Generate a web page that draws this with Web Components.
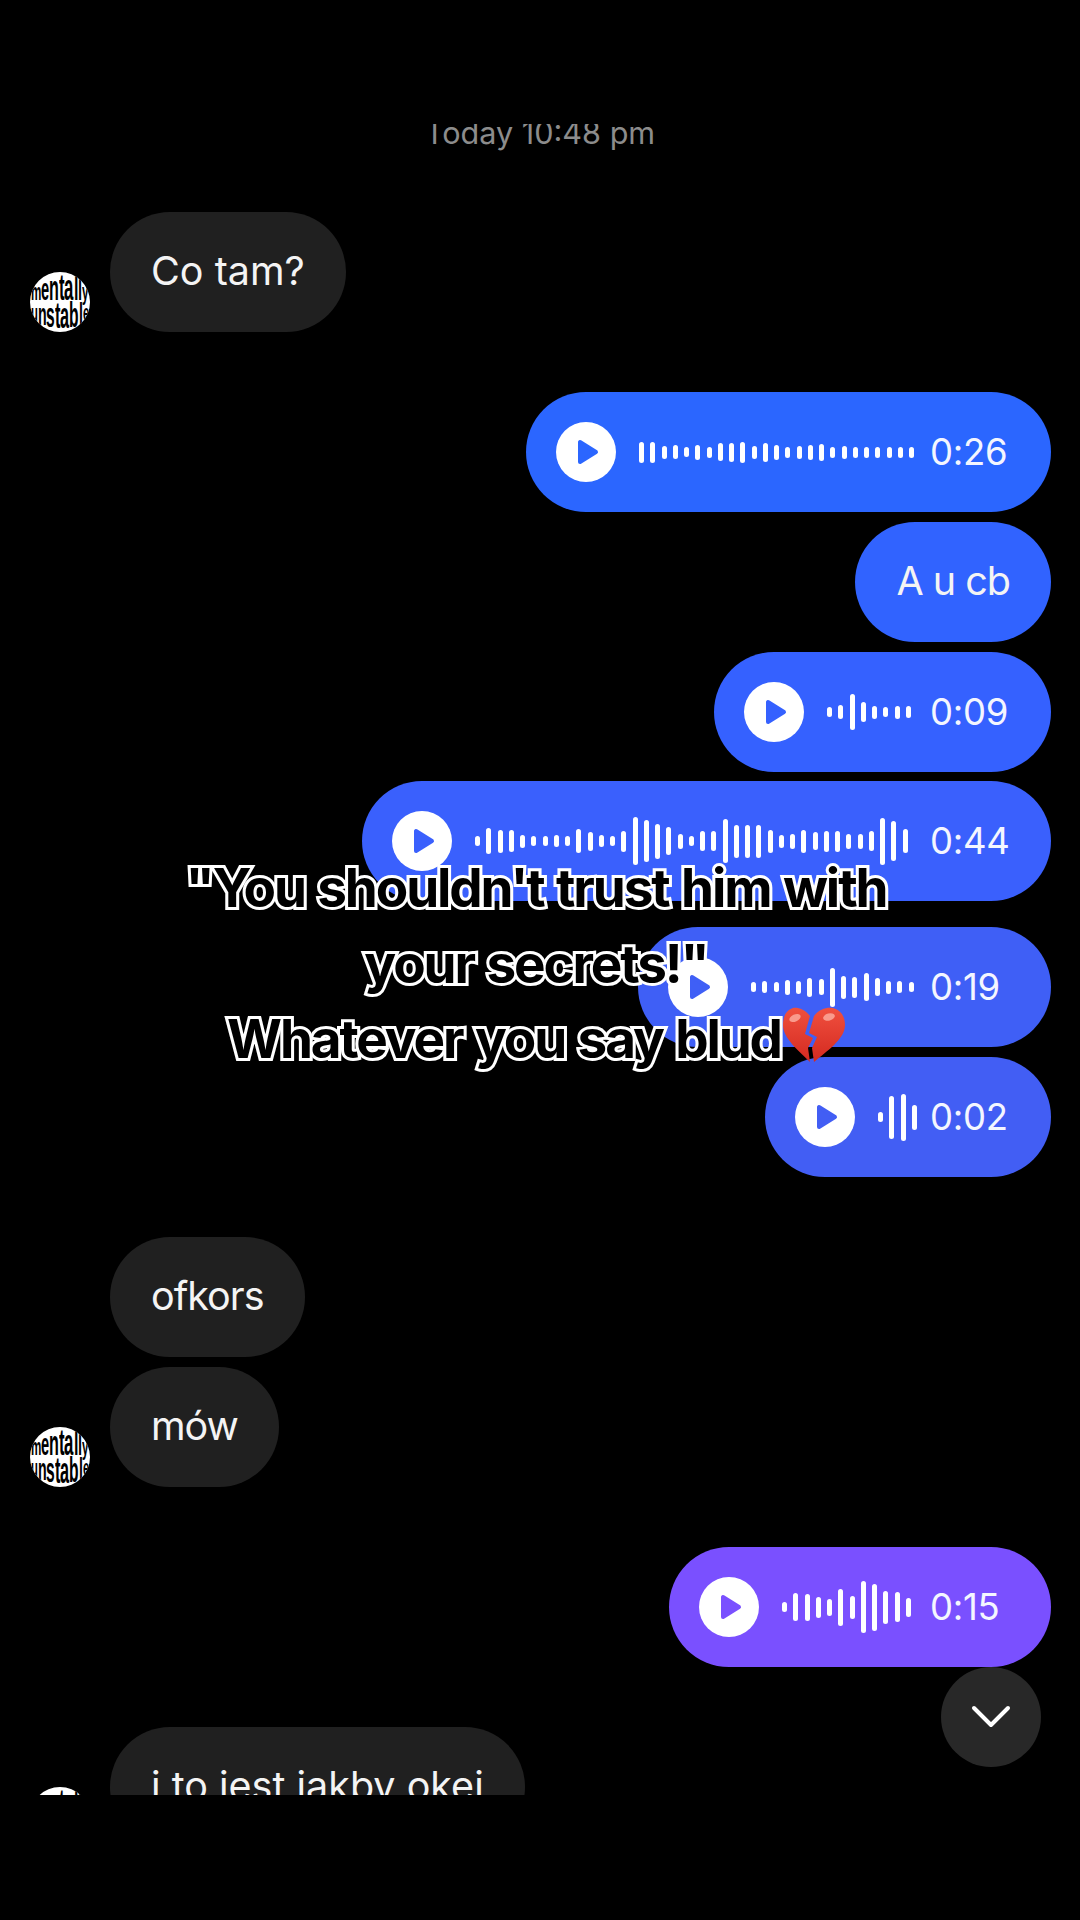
<!DOCTYPE html>
<html>
<head>
<meta charset="utf-8">
<title>Chat</title>
<style>
    html,body{margin:0;background:#000;}
    body{position:relative;width:1080px;height:1920px;overflow:hidden;font-family:Inter,Roboto,sans-serif;}
    .group{margin-top:50px;}
    .nudge{margin-top:-1px;}
    .split{margin-top:16px;}
</style>
</head>
<body>
<chat-screen>
    <chat-stamp>Today 10:48 pm</chat-stamp>

    <chat-row avatar><text-bubble>Co tam?</text-bubble></chat-row>

    <chat-row class="group"><voice-bubble width="525" time="0:26" color="#2b66ff" bars="21,21,13,14,10,15,11,18,19,21,13,19,15,11,13,15,17,11,13,11,11,11,11,11,11"></voice-bubble></chat-row>
    <chat-row><text-bubble color="#3163ff" tracking="-1">A u cb</text-bubble></chat-row>
    <chat-row><voice-bubble width="337" time="0:09" color="#3561ff" bars="10,14,36,20,13,10,13,12"></voice-bubble></chat-row>
    <chat-row class="nudge"><voice-bubble width="689" time="0:44" color="#3a60fd" bars="10,26,23,22,13,10,10,12,10,24,19,12,10,21,48,42,35,28,15,10,20,20,44,33,33,33,23,13,15,23,18,21,21,15,15,20,47,40,24"></voice-bubble></chat-row>
    <chat-row class="split"><voice-bubble width="413" time="0:19" color="#3f5ff6" bars="10,12,10,15,13,19,16,39,23,21,28,18,13,12,10"></voice-bubble></chat-row>
    <chat-row><voice-bubble width="286" time="0:02" color="#425ef4" bars="10,43,47,25"></voice-bubble></chat-row>

    <chat-row class="group" side="in"><text-bubble tracking="-1">ofkors</text-bubble></chat-row>
    <chat-row avatar><text-bubble tracking="-1">mów</text-bubble></chat-row>

    <chat-row class="group"><voice-bubble width="382" time="0:15" color="#7a50ff" bars="10,28,27,21,17,37,23,52,47,33,30,19"></voice-bubble></chat-row>

    <chat-row class="group" avatar><text-bubble>i to jest jakby okej</text-bubble></chat-row>
</chat-screen>

<scroll-down></scroll-down>

<video-caption>"You shouldn't trust him with<br>your secrets!"<br>Whatever you say blud<broken-heart></broken-heart></video-caption>

<script>
class ChatScreen extends HTMLElement{
    constructor(){
        super()
        this.attachShadow({mode:'open'})
    }
    connectedCallback(){
        this.shadowRoot.innerHTML = `
        <style>
            :host{
                display:flex;
                flex-direction:column;
                gap:10px;
                padding-top:124px;
                height:1671px;
                overflow:hidden;
                clip-path:inset(124px 0 0 0);
            }
        </style>
        <slot></slot>
        `
    }
}

class ChatStamp extends HTMLElement{
    constructor(){
        super()
        this.attachShadow({mode:'open'})
    }
    connectedCallback(){
        this.shadowRoot.innerHTML = `
        <style>
            :host{
                display:block;
                flex:none;
                margin-top:-8px;
                margin-bottom:52px;
                height:34px;
                line-height:34px;
                text-align:center;
                font-size:30.6px;
                color:#8c8c8c;
            }
        </style>
        <slot></slot>
        `
    }
}

class ChatRow extends HTMLElement{
    constructor(){
        super()
        this.attachShadow({mode:'open'})
    }
    connectedCallback(){
        let incoming = this.hasAttribute('avatar') || this.getAttribute('side')=='in'
        let pic = this.hasAttribute('avatar') ? '<avatar-badge></avatar-badge>' : '<div class="blank"></div>'
        this.shadowRoot.innerHTML = `
        <style>
            :host{
                display:flex;
                flex:none;
                align-items:flex-end;
                justify-content:${incoming ? 'flex-start' : 'flex-end'};
                padding:0 29px 0 30px;
                gap:20px;
            }
            .blank{width:60px;}
        </style>
        ${incoming ? pic : ''}
        <slot></slot>
        `
    }
}

class TextBubble extends HTMLElement{
    constructor(){
        super()
        this.attachShadow({mode:'open'})
    }
    connectedCallback(){
        this.shadowRoot.innerHTML = `
        <style>
            :host{
                display:block;
                height:120px;
                line-height:118px;
                padding:0 41px;
                border-radius:60px;
                background:${this.getAttribute('color') || '#202020'};
                color:#f4f4f4;
                font-size:39.5px;
                letter-spacing:${this.getAttribute('tracking') || 0}px;
                white-space:nowrap;
            }
        </style>
        <slot></slot>
        `
    }
}

class VoiceBubble extends HTMLElement{
    constructor(){
        super()
        this.attachShadow({mode:'open'})
    }
    connectedCallback(){
        let bars = this.getAttribute('bars').split(',').map(h=>`<i style="height:${h}px"></i>`).join('')
        this.shadowRoot.innerHTML = `
        <style>
            :host{
                --bubble:${this.getAttribute('color')};
                display:flex;
                align-items:center;
                box-sizing:border-box;
                width:${this.getAttribute('width')}px;
                height:120px;
                padding:0 43px 0 30px;
                border-radius:60px;
                background:var(--bubble);
                color:#f4f6ff;
                font-size:36.5px;
            }
            .play{flex:none;width:60px;height:60px;}
            .bars{display:flex;align-items:center;gap:6.25px;margin-left:23px;}
            i{display:block;width:5px;border-radius:3px;background:#fff;}
            .time{margin-left:auto;width:78px;flex:none;white-space:nowrap;letter-spacing:-.3px;}
        </style>
        <svg class="play" viewBox="0 0 60 60">
            <circle cx="30" cy="30" r="30" fill="#fff"/>
            <path d="M24 20 L24 40 L40 30 Z" fill="var(--bubble)" stroke="var(--bubble)" stroke-width="4" stroke-linejoin="round"/>
        </svg>
        <div class="bars">${bars}</div>
        <div class="time">${this.getAttribute('time')}</div>
        `
    }
}

// letters get squeezed towards the rim so the two words look wrapped on a ball
class AvatarBadge extends HTMLElement{
    constructor(){
        super()
        this.attachShadow({mode:'open'})
    }
    word(text,cls){
        let letters = [...text].map(c=>`<span><b>${c}</b></span>`).join('')
        return `<div class="word ${cls}">${letters}</div>`
    }
    squeeze(line){
        let spans = [...line.children]
        let n = spans.length
        let natural = spans.map(s=>s.firstChild.offsetWidth)
        let shape = spans.map((s,i)=>{
            let t = (i+.5)/n*2-1
            return Math.sqrt(1-t*t)
        })
        let weights = natural.map((w,i)=>w*(.4+.6*shape[i]))
        let total = weights.reduce((a,b)=>a+b,0)
        spans.forEach((s,i)=>{
            let w = weights[i]/total*58
            let t = (i+.5)/n*2-1
            s.style.width = w.toFixed(2)+'px'
            s.firstChild.style.transform = `scaleX(${(w/natural[i]).toFixed(3)}) scaleY(${(1.5*Math.sqrt(1-t*t*.8)).toFixed(3)})`
        })
    }
    connectedCallback(){
        this.shadowRoot.innerHTML = `
        <style>
            :host{
                display:block;
                flex:none;
                width:60px;
                height:60px;
                border-radius:50%;
                overflow:hidden;
                background:#fff;
                color:#000;
                font:bold 25px/14px "Liberation Sans",sans-serif;
            }
            .word{display:flex;justify-content:center;height:14px;}
            .top{padding-top:12px;}
            .bottom{padding-top:8px;}
            span{display:block;flex:none;}
            b{display:inline-block;}
            .top b{transform-origin:0 16px;}
            .bottom b{transform-origin:0 3px;}
        </style>
        ${this.word('mentally','top')}
        ${this.word('unstable','bottom')}
        `
        this.shadowRoot.querySelectorAll('.word').forEach(l=>this.squeeze(l))
    }
}

class ScrollDown extends HTMLElement{
    constructor(){
        super()
        this.attachShadow({mode:'open'})
    }
    connectedCallback(){
        this.shadowRoot.innerHTML = `
        <style>
            :host{
                position:absolute;
                left:941px;
                top:1667px;
                width:100px;
                height:100px;
                border-radius:50%;
                background:#282828;
                display:flex;
                align-items:center;
                justify-content:center;
            }
        </style>
        <svg width="40" height="26" viewBox="0 0 40 26">
            <path d="M3 4 L20 21 L37 4" fill="none" stroke="#fff" stroke-width="4" stroke-linecap="round" stroke-linejoin="round"/>
        </svg>
        `
    }
}

class VideoCaption extends HTMLElement{
    constructor(){
        super()
        this.attachShadow({mode:'open'})
    }
    connectedCallback(){
        this.shadowRoot.innerHTML = `
        <style>
            :host{
                position:absolute;
                left:-4px;
                top:851px;
                width:1080px;
                text-align:center;
                font:700 53px/75.5px Inter,Roboto,sans-serif;
                letter-spacing:-2.1px;
                word-spacing:2px;
                white-space:nowrap;
                color:#000;
                -webkit-text-stroke:6px #fff;
                paint-order:stroke fill;
            }
        </style>
        <slot></slot>
        `
    }
}

class BrokenHeart extends HTMLElement{
    constructor(){
        super()
        this.attachShadow({mode:'open'})
    }
    connectedCallback(){
        this.shadowRoot.innerHTML = `
        <style>
            :host{display:inline-block;width:62px;height:56px;vertical-align:-5px;margin-left:2px;}
            svg{display:block;}
        </style>
        <svg width="62" height="56" viewBox="0 0 62 56">
            <defs>
                <linearGradient id="red" x1="0" y1="0" x2="0" y2="1">
                    <stop offset="0" stop-color="#f0503f"/>
                    <stop offset="1" stop-color="#d42a20"/>
                </linearGradient>
            </defs>
            <path d="M27 9 C22 2 14 0 10 1 C3 3 0 10 0 18 C0 31 15 43 27 55 L25 41 L30 31 L22 27 Z" fill="url(#red)"/>
            <path d="M31 9 C36 2 44 0 50 1 C58 3 62 10 62 18 C62 32 44 44 31 55 L29 41 L34 30 L26 26 Z" fill="url(#red)"/>
            <ellipse cx="12" cy="11" rx="6" ry="3.5" fill="#f99a8c" transform="rotate(-25 12 11)"/>
            <ellipse cx="46" cy="10" rx="6" ry="3.5" fill="#f99a8c" transform="rotate(-15 46 10)"/>
        </svg>
        `
    }
}

window.customElements.define('chat-screen',ChatScreen)
window.customElements.define('chat-stamp',ChatStamp)
window.customElements.define('chat-row',ChatRow)
window.customElements.define('text-bubble',TextBubble)
window.customElements.define('voice-bubble',VoiceBubble)
window.customElements.define('avatar-badge',AvatarBadge)
window.customElements.define('scroll-down',ScrollDown)
window.customElements.define('video-caption',VideoCaption)
window.customElements.define('broken-heart',BrokenHeart)
</script>
</body>
</html>
